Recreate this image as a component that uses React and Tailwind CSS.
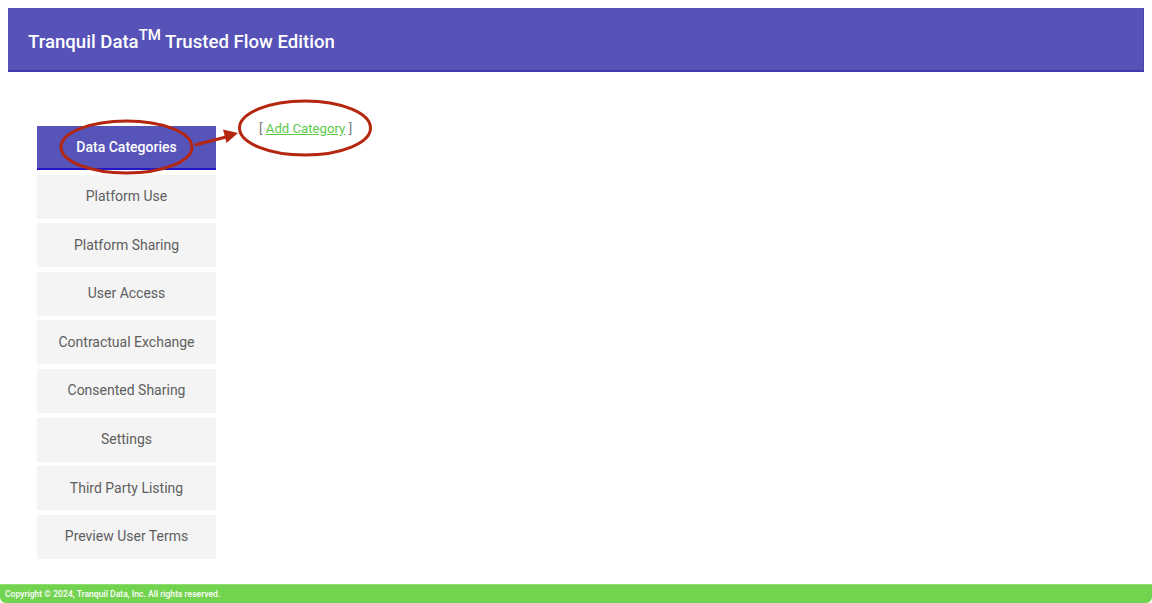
import React from "react";

const items = [
  "Platform Use",
  "Platform Sharing",
  "User Access",
  "Contractual Exchange",
  "Consented Sharing",
  "Settings",
  "Third Party Listing",
  "Preview User Terms",
];

export default function App() {
  return (
    <div className="relative w-[1152px] h-[603px] bg-white flex flex-col overflow-hidden" style={{ fontFamily: "Roboto, 'Liberation Sans', sans-serif" }}>
      <div className="px-2 pt-2">
        <header className="h-[64px] bg-[#5652b8] border-b-2 border-[#3f3aae] border-r border-r-[#4a46b0] flex items-center pl-5 pt-[6px]">
          <h1 className="text-white text-[18.6px] font-medium leading-none">
            Tranquil Data<span className="text-[15px] font-medium relative top-[-8px]">TM</span> Trusted Flow Edition
          </h1>
        </header>
      </div>
      <main className="flex-1 flex pl-[37px] pt-[54px]">
        <nav className="w-[179px] flex flex-col gap-[4.6px]">
          <div className="h-[44px] bg-[#5653b9] border-b-2 border-[#2416c4] flex items-center justify-center text-white text-[14px] font-medium">
            Data Categories
          </div>
          {items.map((t) => (
            <div key={t} className="h-[44px] bg-[#f4f4f4] flex items-center justify-center text-[#5e5e5e] text-[14px]">
              {t}
            </div>
          ))}
        </nav>
        <div className="pl-[43px] -mt-[7px] text-[13.2px] text-[#777]">
          [ <a href="#" className="text-[#5cc94a] underline">Add Category</a> ]
        </div>
      </main>
      <footer className="h-[19px] bg-[#72d34f] border-t border-[#8fe070] rounded-b-[6px] flex items-center pl-[5px]">
        <span className="text-white text-[8.6px] font-medium">Copyright © 2024, Tranquil Data, Inc. All rights reserved.</span>
      </footer>
      <svg className="absolute left-0 top-0 pointer-events-none" width="1152" height="603">
        <ellipse cx="126.5" cy="147" rx="65.5" ry="26" fill="none" stroke="#b5260f" strokeWidth="3" />
        <ellipse cx="305" cy="128" rx="65.5" ry="27" fill="none" stroke="#b5260f" strokeWidth="3" />
        <line x1="195" y1="145" x2="226" y2="137" stroke="#b5260f" strokeWidth="3" />
        <polygon points="238,133 223,129.5 226.5,143" fill="#b5260f" />
      </svg>
    </div>
  );
}
